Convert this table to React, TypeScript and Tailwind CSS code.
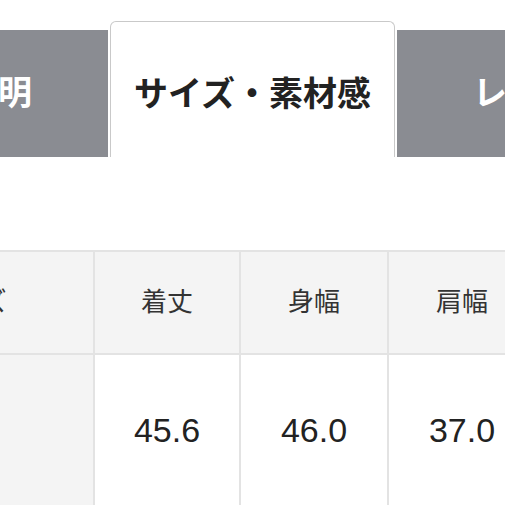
import React from "react";

const tabs = [
  { label: "商品説明", active: false },
  { label: "サイズ・素材感", active: true },
  { label: "レビュー", active: false },
];

const headers = ["サイズ", "着丈", "身幅", "肩幅"];
const values = ["", "45.6", "46.0", "37.0"];

const font = { fontFamily: '"Liberation Sans", "Noto Sans CJK JP", sans-serif' };

export default function App() {
  return (
    <div className="w-[505px] h-[505px] overflow-hidden bg-white" style={font}>
      <div className="flex items-end gap-[2px] ml-[-180px] mt-[21px]">
        {tabs.map((tab) =>
          tab.active ? (
            <div
              key={tab.label}
              className="w-[285px] h-[136px] shrink-0 pt-[9px] flex items-center justify-center bg-white border border-b-0 border-[#c9c9c9] rounded-t-[6px] text-[34px] font-bold text-[#222]"
            >
              {tab.label}
            </div>
          ) : (
            <div
              key={tab.label}
              className="w-[288px] h-[127px] shrink-0 flex items-center justify-center bg-[#8a8c92] text-[34px] font-bold text-white"
            >
              {tab.label}
            </div>
          )
        )}
      </div>

      <div className="mt-[93px] ml-[-157px] grid grid-cols-[252px_146px_148px_148px] border-t-2 border-[#e3e3e3]">
        {headers.map((h) => (
          <div
            key={h}
            className="h-[103px] flex items-center justify-center bg-[#f4f4f4] border-r-2 border-b-2 border-[#e3e3e3] text-[26px] text-[#333]"
          >
            {h}
          </div>
        ))}
        {values.map((v, i) => (
          <div
            key={i}
            className={
              i === 0
                ? "h-[150px] bg-[#f4f4f4] border-r-2 border-[#e3e3e3]"
                : "h-[150px] flex items-center justify-center bg-white border-r-2 border-[#e3e3e3] text-[34px] text-[#222]"
            }
          >
            {v}
          </div>
        ))}
      </div>
    </div>
  );
}
